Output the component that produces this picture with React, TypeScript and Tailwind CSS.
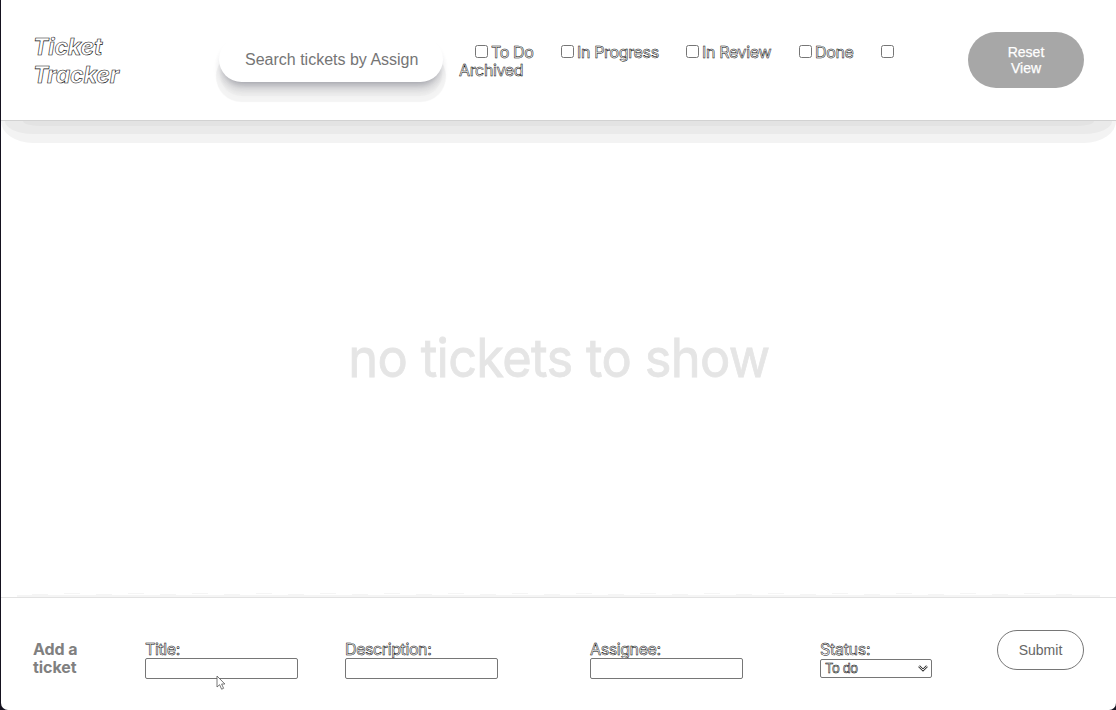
import { useState } from "react";

const filters = [
  { label: "To Do", box: "ml-[16px]", text: "w-[43px] ml-[3px]" },
  { label: "In Progress", box: "ml-[27px]", text: "w-[82px] ml-[3px]" },
  { label: "In Review", box: "ml-[27px]", text: "w-[70px] ml-[3px]" },
  { label: "Done", box: "ml-[27px]", text: "w-[39px] ml-[3px]" },
];

const outlined =
  "text-white [-webkit-text-stroke:0.5px_#000000] whitespace-nowrap font-normal";

const checkbox =
  "relative -top-px block h-[13px] w-[13px] shrink-0 appearance-none rounded-[2.5px] border border-[#767676] bg-white checked:bg-[#767676]";

function Field({ label, className }: { label: string; className: string }) {
  return (
    <label className={`flex w-[153px] shrink-0 flex-col ${className}`}>
      <span className={`h-[18px] text-[16px] leading-[18px] tracking-[-0.4px] ${outlined}`}>{label}</span>
      <input className="h-[21px] w-[153px] rounded-[2px] border border-[#767676] bg-white px-1 text-[13px] outline-none" />
    </label>
  );
}

export default function App() {
  const [query, setQuery] = useState("");
  return (
    <div className="h-[710px] w-[1116px] overflow-hidden bg-[#15121f] pl-px font-['Inter',sans-serif]">
      <div className="relative flex h-[710px] flex-col overflow-hidden rounded-b-[7px] bg-white">
        <header className="flex h-[121px] shrink-0 border-b border-[#d2d2d2] pl-[32px] pr-[32px]">
          <h1 className="mt-[33px] w-[186px] shrink-0 text-[23px] font-bold italic leading-[28px] tracking-[-0.1px] text-white [-webkit-text-stroke:0.6px_#111111]">
            Ticket
            <br />
            Tracker
          </h1>
          <input
            value={query}
            onChange={(e) => setQuery(e.target.value)}
            placeholder="Search tickets by Assign"
            className="mt-[37px] h-[45px] w-[224px] shrink-0 rounded-[23px] bg-white pl-[26px] pr-[20px] font-['Liberation_Sans',sans-serif] text-[16px] text-[#757575] shadow-[0_6px_8px_-5px_rgba(60,62,80,0.45),0_10px_8px_-2px_rgba(60,62,75,0.13),0_15px_1px_-1px_rgba(0,0,0,0.025),0_17px_1px_3px_#f4f4f4] outline-none [clip-path:inset(0_-8px_-26px_-8px)] placeholder:text-[#757575]"
          />
          <div className="ml-[16px] mt-[43px] w-[436px] shrink-0">
            <div className="flex h-[18px] items-center">
              {filters.map((f) => (
                <label key={f.label} className="flex items-center">
                  <input type="checkbox" className={`${checkbox} ${f.box}`} />
                  <span className={`text-[16px] leading-[18px] tracking-[-0.35px] ${f.text} ${outlined}`}>{f.label}</span>
                </label>
              ))}
              <input id="archived" type="checkbox" className={`${checkbox} ml-[27px]`} />
            </div>
            <label htmlFor="archived" className={`block text-[16px] leading-[18px] tracking-[-0.35px] ${outlined}`}>
              Archived
            </label>
          </div>
          <button className="ml-auto mt-[32px] h-[56px] w-[116px] shrink-0 rounded-[28px] bg-[#a7a7a7] font-['Liberation_Sans',sans-serif] text-[14px] leading-[16px] text-white [-webkit-text-stroke:0.25px_#ffffff]">
            Reset
            <br />
            View
          </button>
        </header>
        <div className="h-[22px] shrink-0 overflow-hidden rounded-b-[32px_22px] bg-[#f3f3f3]">
          <div className="mx-[4px] h-[13px] overflow-hidden rounded-b-[28px_13px] bg-[#eaeaea]">
            <div className="mx-[18px] h-[5px] rounded-b-[16px_5px] bg-[#e3e3e3]" />
          </div>
        </div>
        <main className="flex flex-1 justify-center pt-[181px]">
          <p className="h-[68px] scale-x-[0.945] whitespace-nowrap text-[53.5px] leading-[68px] tracking-[-0.7px] text-[#e5e5e5] [-webkit-text-stroke:0.8px_#e5e5e5]">
            no tickets to show
          </p>
        </main>
        <div className="mx-[31px] h-px shrink-0 bg-[repeating-linear-gradient(90deg,transparent_0_32px,#f5f5f5_32px_48px,transparent_48px_64px)]" />
        <div className="mx-[31px] h-px shrink-0 bg-[repeating-linear-gradient(90deg,#f5f5f5_0_16px,transparent_16px_64px)]" />
        <div className="mx-[16px] h-[2px] shrink-0 bg-[#f5f5f5]" />
        <footer className="flex h-[113px] shrink-0 border-t border-[#e2e2e2] pl-[32px] pr-[32px]">
          <h2 className="mt-[42px] w-[112px] shrink-0 text-[16px] font-bold leading-[18px] tracking-[-0.05px] text-[#808080]">
            Add a
            <br />
            ticket
          </h2>
          <Field label="Title:" className="mt-[42px]" />
          <Field label="Description:" className="ml-[47px] mt-[42px]" />
          <Field label="Assignee:" className="ml-[92px] mt-[42px]" />
          <div className="ml-[77px] mt-[42px] w-[112px] shrink-0">
            <div className={`h-[19px] text-[16px] leading-[18px] tracking-[-0.3px] ${outlined}`}>Status:</div>
            <button className="flex h-[19px] w-[112px] items-center justify-between rounded-[2px] border border-[#767676] bg-white pl-[4px] pr-[3px]">
              <span className="text-[13px] leading-[17px] tracking-[-0.4px] text-white [-webkit-text-stroke:0.5px_#000000]">To do</span>
              <svg width="10" height="7" viewBox="0 0 10 7" fill="none">
                <path d="M1 1.2 5 5 9 1.2" stroke="#333" strokeWidth="2.4" />
                <path d="M1 1.2 5 5 9 1.2" stroke="#fff" strokeWidth="0.9" />
              </svg>
            </button>
          </div>
          <button className="ml-auto mt-[32px] h-[40px] w-[87px] shrink-0 rounded-[20px] border border-[#767676] bg-white font-['Liberation_Sans',sans-serif] text-[14px] text-[#666666]">
            Submit
          </button>
        </footer>
        <svg className="absolute left-[215px] top-[675px]" width="11" height="16" viewBox="0 0 11 16">
          <path d="M1 1v11l2.6-2.3 2 4.5 2-.9-2-4.3h3.3z" fill="#fff" stroke="#555" strokeWidth=".8" />
        </svg>
      </div>
    </div>
  );
}
